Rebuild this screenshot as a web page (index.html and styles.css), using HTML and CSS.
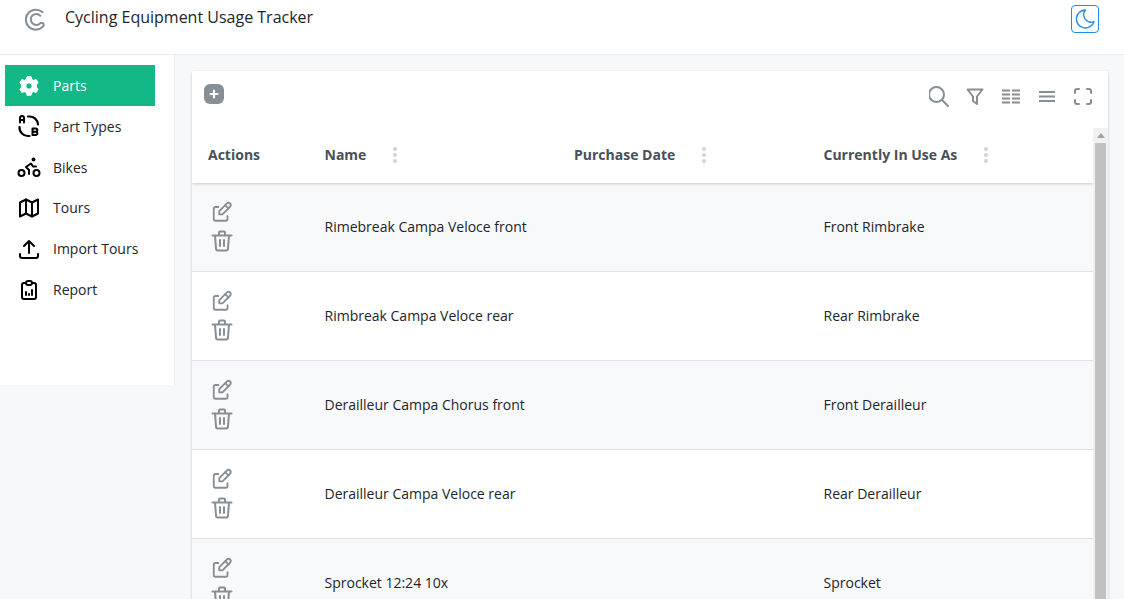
FILE: index.html
```html
<!DOCTYPE html>
<html lang="en">
<head>
<meta charset="utf-8">
<title>Cycling Equipment Usage Tracker</title>
<link rel="stylesheet" href="styles.css">
</head>
<body>
<header class="topbar">
  <svg class="logo" viewBox="0 0 22 24" fill="none" stroke="#868e96" stroke-width="2" stroke-linecap="round" stroke-linejoin="round"><path d="M17.500 4.200A10 10 0 1 0 17.800 18.800c1.600-1.300 1-4-1-3.800"/><path d="M15.400 7.800A5.500 5.500 0 1 0 15.600 14.800"/></svg>
  <h1 class="title">Cycling Equipment Usage Tracker</h1>
  <button class="theme" type="button" aria-label="Toggle theme">
    <svg viewBox="0 0 24 24" fill="none" stroke="#228be6" stroke-width="1.400" stroke-linecap="round" stroke-linejoin="round"><path d="M12 3h.4a7.500 7.500 0 0 0 8.600 11.600A9 9 0 1 1 12 3z"/></svg>
  </button>
</header>
<div class="shell">
  <nav class="sidebar">
    <a class="nav-item active">
      <svg class="nav-icon" viewBox="0 0 24 24"><path fill="#fff" stroke="#fff" stroke-linejoin="round" fill-rule="evenodd" d="M10 2.700h4l.8 2.700 1.700.9 2.700-.8 2 3.500-2 1.900v2.200l2 1.900-2 3.500-2.700-.8-1.700.9-.8 2.700h-4l-.8-2.700-1.700-.9-2.700.8-2-3.500 2-1.900v-2.200l-2-1.900 2-3.500 2.700.8 1.700-.9zM12 8.800a3.200 3.200 0 1 0 0 6.400 3.200 3.200 0 0 0 0-6.400z"/></svg>
      <span>Parts</span>
    </a>
    <a class="nav-item">
      <svg class="nav-icon" viewBox="0 0 24 24" fill="none" stroke="#000" stroke-width="2.200" stroke-linecap="round" stroke-linejoin="round"><path d="M11 2.500h1a8.500 8.500 0 0 1 9 8"/><path d="M2.500 13a8.500 8.500 0 0 0 9 9h1"/><path d="M3 8.500V4a2 2 0 0 1 4 0v4.500M3 6h4" stroke-width="2"/><path d="M15.500 14.500v6.500h3.200a1.600 1.600 0 0 0 0-3.250h-3.200M15.500 17.750h3.200a1.600 1.600 0 0 0 0-3.250h-3.200" stroke-width="2"/></svg>
      <span>Part Types</span>
    </a>
    <a class="nav-item">
      <svg class="nav-icon" viewBox="0 0 24 24" fill="none" stroke="#000" stroke-width="2" stroke-linecap="round" stroke-linejoin="round"><circle cx="4.500" cy="18" r="3"/><circle cx="19.500" cy="18" r="3"/><circle cx="16.500" cy="4.500" r="1" fill="#000"/><path d="M12 19v-4l-3-3 5-3.500 2 3h3"/></svg>
      <span>Bikes</span>
    </a>
    <a class="nav-item">
      <svg class="nav-icon" viewBox="0 0 24 24" fill="none" stroke="#000" stroke-width="2" stroke-linecap="round" stroke-linejoin="round"><path d="M3 6.500l6-3 6 3 6-3v14l-6 3-6-3-6 3z"/><path d="M9 3.500v14M15 6.500v14"/></svg>
      <span>Tours</span>
    </a>
    <a class="nav-item">
      <svg class="nav-icon" viewBox="0 0 24 24" fill="none" stroke="#000" stroke-width="2" stroke-linecap="round" stroke-linejoin="round"><path d="M3 17v2a2 2 0 0 0 2 2h14a2 2 0 0 0 2-2v-2"/><path d="M7 9l5-5 5 5M12 4v12"/></svg>
      <span>Import Tours</span>
    </a>
    <a class="nav-item">
      <svg class="nav-icon" viewBox="0 0 24 24" fill="none" stroke="#000" stroke-width="2" stroke-linecap="round" stroke-linejoin="round"><path d="M9 5H7a2 2 0 0 0-2 2v12a2 2 0 0 0 2 2h10a2 2 0 0 0 2-2V7a2 2 0 0 0-2-2h-2"/><rect x="9" y="3" width="6" height="4" rx="2"/><path d="M9 17v-3M12 17v-1M15 17v-5"/></svg>
      <span>Report</span>
    </a>
  </nav>
  <main class="content">
    <section class="card">
      <div class="toolbar">
        <button class="add" type="button" aria-label="Add">
          <svg viewBox="0 0 20 20"><path d="M10 6.500v7M6.500 10h7" stroke="#fff" stroke-width="2.200" stroke-linecap="round"/></svg>
        </button>
        <div class="tools">
          <svg class="tool" viewBox="0 0 24 24" fill="none" stroke="#868e96" stroke-width="2" stroke-linecap="round"><circle cx="7.500" cy="9.500" r="7.500"/><path d="M13 15l6 6"/></svg>
          <svg class="tool" viewBox="0 0 24 24" fill="none" stroke="#868e96" stroke-width="2" stroke-linecap="round" stroke-linejoin="round"><path d="M2.500 4.500h15l-5.500 7v7.500l-4-3v-4.500z"/></svg>
          <svg class="tool" viewBox="0 0 24 24" fill="none" stroke="#868e96" stroke-width="2"><path d="M1 5.500h8M11 5.500h8M1 9.500h8M11 9.500h8M1 13.500h8M11 13.500h8M1 17.500h8M11 17.500h8"/></svg>
          <svg class="tool" viewBox="0 0 24 24" fill="none" stroke="#868e96" stroke-width="2"><path d="M2 7h16M2 11.500h16M2 16h16"/></svg>
          <svg class="tool" viewBox="0 0 24 24" fill="none" stroke="#868e96" stroke-width="2" stroke-linecap="round" stroke-linejoin="round"><path d="M2 8V6a2 2 0 0 1 2-2h2M14 4h2a2 2 0 0 1 2 2v2M18 15v2a2 2 0 0 1-2 2h-2M6 19H4a2 2 0 0 1-2-2v-2"/></svg>
        </div>
      </div>
      <div class="table-wrap">
        <div class="table">
          <div class="row head">
            <div class="cell">Actions</div>
            <div class="cell">Name<span class="dots"></span></div>
            <div class="cell">Purchase Date<span class="dots"></span></div>
            <div class="cell">Currently In Use As<span class="dots"></span></div>
          </div>
          <div class="row odd">
            <div class="cell actions">
              <svg class="act" viewBox="0 0 24 24" fill="none" stroke="#868e96" stroke-width="2" stroke-linecap="round" stroke-linejoin="round"><path d="M8 6.500H5a2 2 0 0 0-2 2v11a2 2 0 0 0 2 2h11a2 2 0 0 0 2-2v-3"/><path d="M21 6a2.500 2.500 0 0 0-3.500-3.500L9 11v3.500h3.500z"/><path d="M15.500 4.500L19 8"/></svg>
              <svg class="act" viewBox="0 0 24 24" fill="none" stroke="#868e96" stroke-width="2" stroke-linecap="round" stroke-linejoin="round"><path d="M2.500 6.500h19M10 11v6M14 11v6M5 6.500l1 13a2 2 0 0 0 2 2h8a2 2 0 0 0 2-2l1-13M9 6.500v-3a1 1 0 0 1 1-1h4a1 1 0 0 1 1 1v3"/></svg>
            </div>
            <div class="cell">Rimebreak Campa Veloce front</div>
            <div class="cell"></div>
            <div class="cell">Front Rimbrake</div>
          </div>
          <div class="row">
            <div class="cell actions">
              <svg class="act" viewBox="0 0 24 24" fill="none" stroke="#868e96" stroke-width="2" stroke-linecap="round" stroke-linejoin="round"><path d="M8 6.500H5a2 2 0 0 0-2 2v11a2 2 0 0 0 2 2h11a2 2 0 0 0 2-2v-3"/><path d="M21 6a2.500 2.500 0 0 0-3.500-3.500L9 11v3.500h3.500z"/><path d="M15.500 4.500L19 8"/></svg>
              <svg class="act" viewBox="0 0 24 24" fill="none" stroke="#868e96" stroke-width="2" stroke-linecap="round" stroke-linejoin="round"><path d="M2.500 6.500h19M10 11v6M14 11v6M5 6.500l1 13a2 2 0 0 0 2 2h8a2 2 0 0 0 2-2l1-13M9 6.500v-3a1 1 0 0 1 1-1h4a1 1 0 0 1 1 1v3"/></svg>
            </div>
            <div class="cell">Rimbreak Campa Veloce rear</div>
            <div class="cell"></div>
            <div class="cell">Rear Rimbrake</div>
          </div>
          <div class="row odd">
            <div class="cell actions">
              <svg class="act" viewBox="0 0 24 24" fill="none" stroke="#868e96" stroke-width="2" stroke-linecap="round" stroke-linejoin="round"><path d="M8 6.500H5a2 2 0 0 0-2 2v11a2 2 0 0 0 2 2h11a2 2 0 0 0 2-2v-3"/><path d="M21 6a2.500 2.500 0 0 0-3.500-3.500L9 11v3.500h3.500z"/><path d="M15.500 4.500L19 8"/></svg>
              <svg class="act" viewBox="0 0 24 24" fill="none" stroke="#868e96" stroke-width="2" stroke-linecap="round" stroke-linejoin="round"><path d="M2.500 6.500h19M10 11v6M14 11v6M5 6.500l1 13a2 2 0 0 0 2 2h8a2 2 0 0 0 2-2l1-13M9 6.500v-3a1 1 0 0 1 1-1h4a1 1 0 0 1 1 1v3"/></svg>
            </div>
            <div class="cell">Derailleur Campa Chorus front</div>
            <div class="cell"></div>
            <div class="cell">Front Derailleur</div>
          </div>
          <div class="row">
            <div class="cell actions">
              <svg class="act" viewBox="0 0 24 24" fill="none" stroke="#868e96" stroke-width="2" stroke-linecap="round" stroke-linejoin="round"><path d="M8 6.500H5a2 2 0 0 0-2 2v11a2 2 0 0 0 2 2h11a2 2 0 0 0 2-2v-3"/><path d="M21 6a2.500 2.500 0 0 0-3.500-3.500L9 11v3.500h3.500z"/><path d="M15.500 4.500L19 8"/></svg>
              <svg class="act" viewBox="0 0 24 24" fill="none" stroke="#868e96" stroke-width="2" stroke-linecap="round" stroke-linejoin="round"><path d="M2.500 6.500h19M10 11v6M14 11v6M5 6.500l1 13a2 2 0 0 0 2 2h8a2 2 0 0 0 2-2l1-13M9 6.500v-3a1 1 0 0 1 1-1h4a1 1 0 0 1 1 1v3"/></svg>
            </div>
            <div class="cell">Derailleur Campa Veloce rear</div>
            <div class="cell"></div>
            <div class="cell">Rear Derailleur</div>
          </div>
          <div class="row odd">
            <div class="cell actions">
              <svg class="act" viewBox="0 0 24 24" fill="none" stroke="#868e96" stroke-width="2" stroke-linecap="round" stroke-linejoin="round"><path d="M8 6.500H5a2 2 0 0 0-2 2v11a2 2 0 0 0 2 2h11a2 2 0 0 0 2-2v-3"/><path d="M21 6a2.500 2.500 0 0 0-3.500-3.500L9 11v3.500h3.500z"/><path d="M15.500 4.500L19 8"/></svg>
              <svg class="act" viewBox="0 0 24 24" fill="none" stroke="#868e96" stroke-width="2" stroke-linecap="round" stroke-linejoin="round"><path d="M2.500 6.500h19M10 11v6M14 11v6M5 6.500l1 13a2 2 0 0 0 2 2h8a2 2 0 0 0 2-2l1-13M9 6.500v-3a1 1 0 0 1 1-1h4a1 1 0 0 1 1 1v3"/></svg>
            </div>
            <div class="cell">Sprocket 12:24 10x</div>
            <div class="cell"></div>
            <div class="cell">Sprocket</div>
          </div>
        </div>
        <div class="scrollbar">
          <span class="arrow"></span>
          <span class="thumb"></span>
        </div>
      </div>
    </section>
  </main>
</div>
</body>
</html>
```
FILE: styles.css
```css
* { box-sizing: border-box; }
html, body { height: 100%; }
body {
  margin: 0;
  height: 599px;
  overflow: hidden;
  background: #f7f8fa;
  color: #212529;
  font-family: "Open Sans", "Noto Sans", sans-serif;
  font-size: 14px;
  display: flex;
  flex-direction: column;
}
.topbar {
  flex: none;
  height: 55px;
  background: #fff;
  border-bottom: 1px solid #e9ecef;
  display: flex;
  align-items: flex-start;
  padding: 6px 25px 0 25px;
}
.logo { width: 22px; height: 24px; margin-top: 2px; }
.title {
  margin: 0 0 0 18px;
  font-size: 16px;
  font-weight: 400;
  line-height: 22px;
  flex: 1;
}
.theme {
  width: 28px;
  height: 28px;
  margin-top: -1px;
  padding: 1px;
  background: #fff;
  border: 1px solid #228be6;
  border-radius: 4px;
  display: flex;
}
.theme svg { width: 24px; height: 24px; }
.shell { flex: 1; display: flex; min-height: 0; align-items: flex-start; }
.sidebar {
  flex: none;
  width: 175px;
  height: 330px;
  background: #fff;
  border-right: 1px solid #e9ecef;
  padding: 10.2px 19px 0 5px;
  display: flex;
  flex-direction: column;
}
.nav-item {
  height: 40.8px;
  padding-left: 12px;
  display: flex;
  align-items: center;
  gap: 12px;
  color: #212529;
  font-size: 14px;
}
.nav-item.active { background: #12b886; color: #fff; }
.nav-icon { width: 24px; height: 24px; flex: none; }
.content { flex: 1; min-width: 0; padding: 16px 16px 0 17px; height: 100%; overflow: hidden; }
.card {
  height: 600px;
  background: #fff;
  border-radius: 2px;
  box-shadow: 0 1px 3px rgba(0, 0, 0, .2);
  display: flex;
  flex-direction: column;
}
.toolbar {
  flex: none;
  height: 57px;
  padding: 13px 11px 0 12px;
  display: flex;
  justify-content: space-between;
  align-items: flex-start;
}
.add {
  width: 20px;
  height: 20px;
  padding: 0;
  border: 0;
  border-radius: 6px;
  background: #868e96;
  display: flex;
}
.tools { display: flex; gap: 12px; margin-top: 1px; }
.tool { width: 24px; height: 24px; }
.table-wrap { flex: 1; display: flex; min-height: 0; }
.table { flex: 1; min-width: 0; }
.row {
  display: grid;
  grid-template-columns: 116.5px 249.5px 249.5px 1fr;
  height: 89px;
  border-bottom: 1px solid #dee2e6;
  font-size: 14px;
}
.row.odd { background: #f8f9fa; }
.row.head {
  height: 55px;
  font-weight: 700;
  color: #495057;
  border-bottom: 0;
  box-shadow: 0 1px 3px rgba(0, 0, 0, .2);
  clip-path: inset(0 0 -6px 0);
  position: relative;
}
.cell { padding: 0 16px 2px; display: flex; align-items: center; }
.dots {
  width: 4px;
  height: 4px;
  margin-left: 27px;
  border-radius: 50%;
  background: #ced4da;
  box-shadow: 0 -6px 0 #ced4da, 0 6px 0 #ced4da;
}
.actions {
  flex-direction: column;
  align-items: flex-start;
  justify-content: center;
  gap: 6px;
  padding: 0 16px 0 18px;
}
.act { width: 24px; height: 24px; display: block; }
.act:first-child { width: 22px; height: 22px; margin-left: 1px; }
.scrollbar {
  flex: none;
  width: 15px;
  background: #f1f1f1;
  display: flex;
  flex-direction: column;
  align-items: center;
  padding-top: 5px;
}
.arrow {
  width: 0;
  height: 0;
  border-left: 4px solid transparent;
  border-right: 4px solid transparent;
  border-bottom: 5px solid #a3a3a3;
  margin-bottom: 5px;
}
.thumb { width: 11px; flex: 1; background: #c1c1c1; }
```
